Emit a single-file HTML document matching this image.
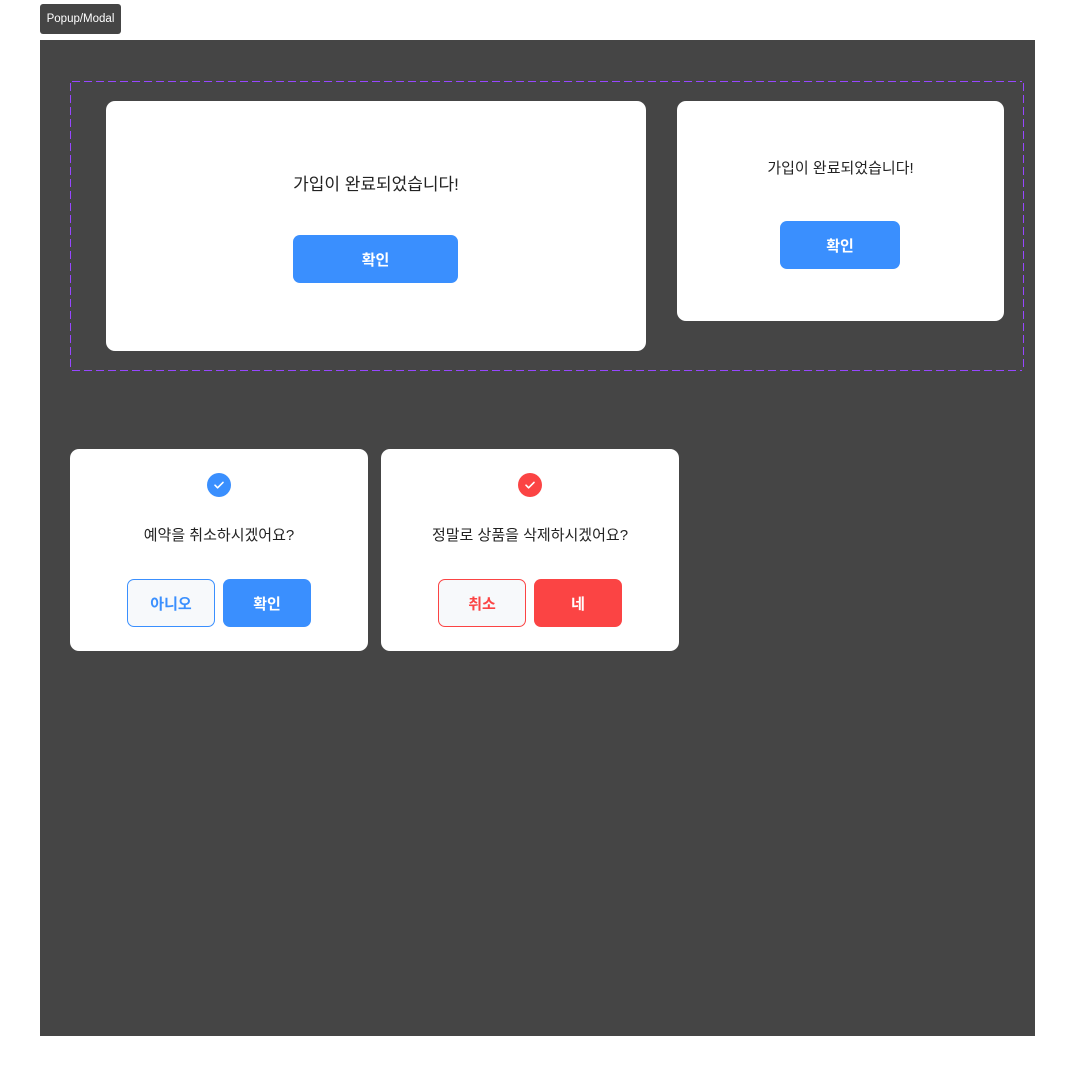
<!DOCTYPE html>
<html><head><meta charset="utf-8"><style>
*{box-sizing:border-box;margin:0;padding:0}
body{width:1075px;height:1076px;background:#fff;position:relative;font-family:"Liberation Sans","Noto Sans CJK KR",sans-serif;overflow:hidden}
.abs{position:absolute}
.lbl{left:40px;top:4px;width:81px;height:30px;background:#454545;border-radius:3px;color:#fff;font-size:11.5px;line-height:30px;text-align:center}
.board{left:40px;top:40px;width:995px;height:996px;background:#454545}
.card{background:#fff;border-radius:9px;overflow:hidden}
.t{color:#222;font-size:16px;text-align:center;width:100%}
.btn{border-radius:7px;font-size:15px;font-weight:bold;display:flex;align-items:center;justify-content:center}
.blue{background:#3a8ffe;color:#fff}
.red{background:#fb4444;color:#fff}
.ob{background:#f7f9fb;border:1px solid #3a8ffe;color:#3a8ffe}
.or{background:#f7f9fb;border:1px solid #fb4444;color:#fb4444}
.ic{width:24px;height:24px;border-radius:50%;display:flex;align-items:center;justify-content:center}
.h{height:1px;background:repeating-linear-gradient(90deg,#9747ff 0 8px,transparent 8px 12px)}
.v{width:1px;background:repeating-linear-gradient(180deg,#9747ff 0 8px,transparent 8px 12px)}
</style></head><body>
<div class="abs lbl">Popup/Modal</div>
<div class="abs board"></div>
<div class="abs h" style="left:72px;top:81px;width:950px"></div>
<div class="abs h" style="left:72px;top:370px;width:950px"></div>
<div class="abs v" style="left:70px;top:83px;height:286px"></div>
<div class="abs v" style="left:1023px;top:83px;height:286px"></div>

<div class="abs card" style="left:106px;top:101px;width:540px;height:250px">
  <div class="abs t" style="top:69px;font-size:17px">가입이 완료되었습니다!</div>
  <div class="abs btn blue" style="left:187px;top:134px;width:165px;height:48px">확인</div>
</div>
<div class="abs card" style="left:677px;top:101px;width:327px;height:220px">
  <div class="abs t" style="top:56px;font-size:15px">가입이 완료되었습니다!</div>
  <div class="abs btn blue" style="left:103px;top:120px;width:120px;height:48px">확인</div>
</div>

<div class="abs card" style="left:70px;top:449px;width:298px;height:202px">
  <div class="abs ic" style="left:137px;top:24px;background:#3a8ffe"><svg width="12" height="12" viewBox="0 0 12 12"><path d="M2 6.2l2.6 2.6L10 3.4" fill="none" stroke="#fff" stroke-width="1.6" stroke-linecap="round" stroke-linejoin="round"/></svg></div>
  <div class="abs t" style="top:75px;font-size:15px">예약을 취소하시겠어요?</div>
  <div class="abs btn ob" style="left:57px;top:130px;width:88px;height:48px">아니오</div>
  <div class="abs btn blue" style="left:153px;top:130px;width:88px;height:48px">확인</div>
</div>
<div class="abs card" style="left:381px;top:449px;width:298px;height:202px">
  <div class="abs ic" style="left:137px;top:24px;background:#fb4444"><svg width="12" height="12" viewBox="0 0 12 12"><path d="M2 6.2l2.6 2.6L10 3.4" fill="none" stroke="#fff" stroke-width="1.6" stroke-linecap="round" stroke-linejoin="round"/></svg></div>
  <div class="abs t" style="top:75px;font-size:15px">정말로 상품을 삭제하시겠어요?</div>
  <div class="abs btn or" style="left:57px;top:130px;width:88px;height:48px">취소</div>
  <div class="abs btn red" style="left:153px;top:130px;width:88px;height:48px">네</div>
</div>
</body></html>
